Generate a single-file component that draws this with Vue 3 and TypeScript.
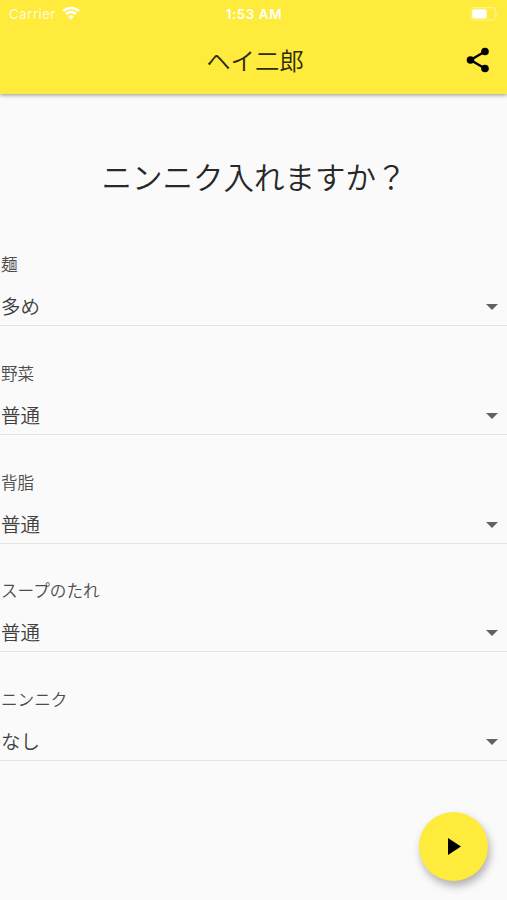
<script setup lang="ts">
interface Topping {
  label: string
  value: string
}

const toppings: Topping[] = [
  { label: '麺', value: '多め' },
  { label: '野菜', value: '普通' },
  { label: '背脂', value: '普通' },
  { label: 'スープのたれ', value: '普通' },
  { label: 'ニンニク', value: 'なし' },
]
</script>

<template>
  <div class="screen">
    <header class="app-bar">
      <div class="status">
        <div class="carrier">
          <span>Carrier</span>
          <svg class="wifi" viewBox="0 0 18 14" aria-hidden="true">
            <path d="M1.2 5.2a11 11 0 0 1 15.6 0M4 8.1a7 7 0 0 1 10 0" />
            <path class="dot" d="M9 13.4l-2.7-2.9a3.8 3.8 0 0 1 5.4 0z" />
          </svg>
        </div>
        <span class="clock">1:53 AM</span>
        <svg class="battery" viewBox="0 0 29 14" aria-hidden="true">
          <rect class="shell" x="0.6" y="0.6" width="24.8" height="12.4" rx="3.2" />
          <rect class="charge" x="2.2" y="2.2" width="14.6" height="9.2" rx="1.6" />
          <path class="cap" d="M26.6 4.4c2 .8 2 4 0 4.8z" />
        </svg>
      </div>
      <div class="toolbar">
        <h1 class="title">ヘイ二郎</h1>
        <button class="share" aria-label="共有">
          <svg viewBox="0 0 24 26" aria-hidden="true">
            <path d="M19 4.5L4.5 13L19 21.5" />
            <circle cx="19" cy="4.5" r="3.8" />
            <circle cx="4.5" cy="13" r="3.8" />
            <circle cx="19" cy="21.5" r="3.8" />
          </svg>
        </button>
      </div>
    </header>

    <main class="content">
      <h2 class="question">ニンニク入れますか？</h2>
      <section v-for="topping in toppings" :key="topping.label" class="field">
        <div class="label">{{ topping.label }}</div>
        <div class="select">
          <span>{{ topping.value }}</span>
          <svg class="arrow" viewBox="0 0 12 6" aria-hidden="true"><path d="M0 0h12L6 6z" /></svg>
        </div>
      </section>
    </main>

    <button class="fab" aria-label="再生">
      <svg viewBox="0 0 13 17" aria-hidden="true"><path d="M0 0v17l13-8.5z" /></svg>
    </button>
  </div>
</template>

<style>
body {
  background: #fafafa;
}
</style>

<style scoped>
.screen {
  position: relative;
  height: 900px;
  overflow: hidden;
  background: #fafafa;
  color: #404040;
  font-family: "Noto Sans CJK JP", sans-serif;
  font-weight: 350;
}

.app-bar {
  height: 94px;
  background: #ffeb3b;
  box-shadow: 0 1px 4px rgba(0, 0, 0, 0.42);
}

.status {
  display: grid;
  grid-template-columns: 1fr auto 1fr;
  align-items: center;
  height: 27px;
  padding: 0 8px 0 9px;
  color: rgba(255, 255, 255, 0.82);
  font: 400 13.3px/27px Inter, sans-serif;
}

.carrier {
  display: flex;
  align-items: center;
  gap: 6px;
  letter-spacing: 0.5px;
}

.carrier span,
.clock {
  padding-top: 1px;
}

.wifi {
  width: 18px;
  height: 14px;
  margin-top: -2px;
  fill: none;
  stroke: #fff;
  stroke-width: 2.6;
}

.wifi .dot {
  fill: #fff;
  stroke: none;
}

.clock {
  color: #fff;
  font-weight: 600;
  font-size: 13.5px;
  letter-spacing: 0.5px;
}

.battery {
  justify-self: end;
  width: 29px;
  height: 14px;
}

.shell {
  fill: none;
  stroke: rgba(255, 255, 255, 0.4);
  stroke-width: 1.1;
}

.charge {
  fill: #fff;
}

.cap {
  fill: rgba(255, 255, 255, 0.4);
}

.toolbar {
  display: grid;
  grid-template-columns: 1fr auto 1fr;
  align-items: center;
  height: 65px;
  padding: 0 17px;
}

.title {
  grid-column: 2;
  margin: 0;
  padding-left: 3px;
  color: #2d2a12;
  font-size: 24.4px;
  font-weight: 350;
  line-height: 36px;
}

.share,
.fab {
  display: flex;
  border: 0;
  padding: 0;
  background: none;
}

.share {
  justify-self: end;
}

.share svg {
  width: 24px;
  height: 26px;
  stroke: #000;
  stroke-width: 2.4;
}

.share circle {
  stroke: none;
}

.share path {
  fill: none;
}

.question {
  margin: 60px 0 46px;
  padding-left: 1px;
  color: #282828;
  font-size: 30.5px;
  font-weight: 350;
  line-height: 44px;
  text-align: center;
}

.field {
  height: 108.75px;
}

.label {
  height: 41px;
  padding-left: 1px;
  color: #4c4c4c;
  font-size: 16.6px;
  line-height: 40px;
}

.select {
  display: flex;
  align-items: center;
  justify-content: space-between;
  height: 38px;
  padding: 2px 9px 0 1px;
  border-bottom: 1px solid #e3e3e3;
  font-size: 19.5px;
  line-height: 38px;
}

.arrow {
  width: 12px;
  height: 6px;
  margin-top: 2px;
  fill: #616161;
}

.fab {
  position: absolute;
  right: 19px;
  bottom: 19px;
  align-items: center;
  justify-content: center;
  width: 69px;
  height: 69px;
  border-radius: 50%;
  background: #ffeb3b;
  box-shadow: 2px 5px 9px rgba(0, 0, 0, 0.3);
}

.fab svg {
  width: 13px;
  height: 17px;
  margin-left: 2px;
}
</style>
